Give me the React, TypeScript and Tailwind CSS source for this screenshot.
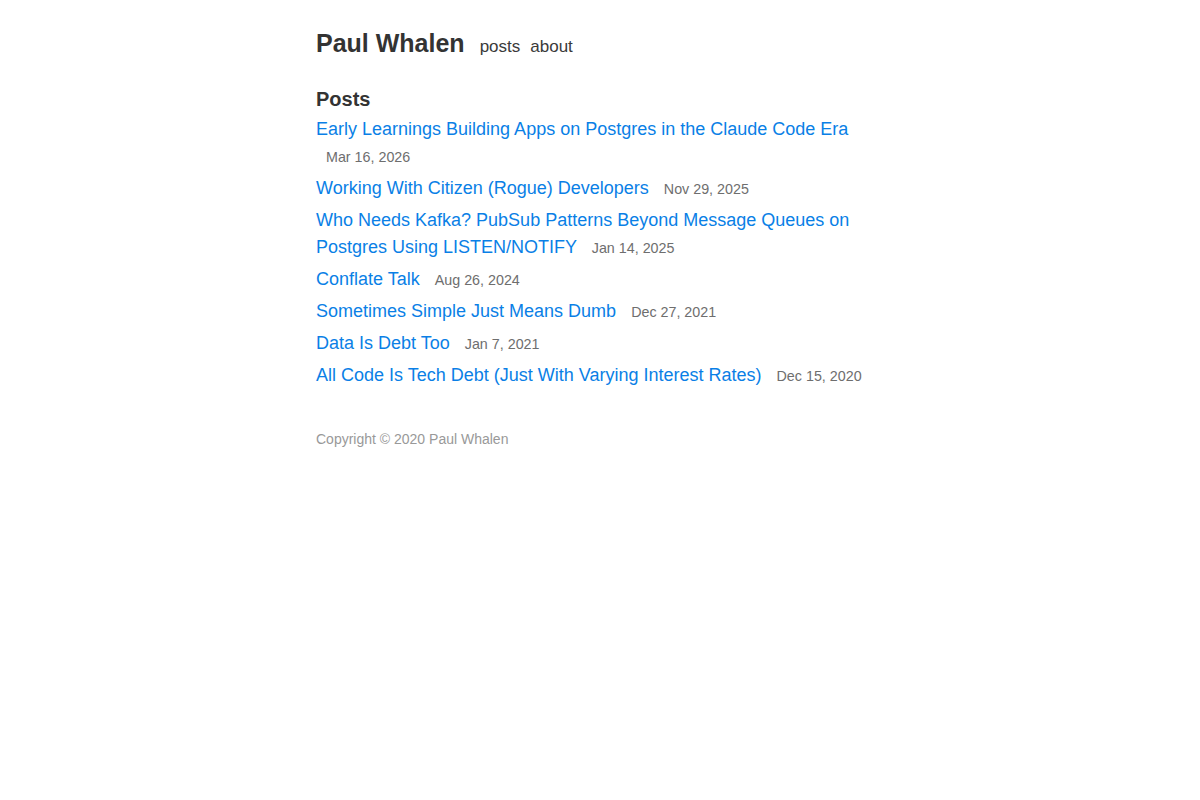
import React from 'react';

interface Post {
  title: string;
  date: string;
}

const posts: Post[] = [
  { title: 'Early Learnings Building Apps on Postgres in the Claude Code Era', date: 'Mar 16, 2026' },
  { title: 'Working With Citizen (Rogue) Developers', date: 'Nov 29, 2025' },
  { title: 'Who Needs Kafka? PubSub Patterns Beyond Message Queues on Postgres Using LISTEN/NOTIFY', date: 'Jan 14, 2025' },
  { title: 'Conflate Talk', date: 'Aug 26, 2024' },
  { title: 'Sometimes Simple Just Means Dumb', date: 'Dec 27, 2021' },
  { title: 'Data Is Debt Too', date: 'Jan 7, 2021' },
  { title: 'All Code Is Tech Debt (Just With Varying Interest Rates)', date: 'Dec 15, 2020' },
];

export default function App() {
  return (
    <div className="min-h-[800px] bg-white font-['Liberation_Sans',Arial,sans-serif] text-[#333]">
      <div className="mx-auto w-[568px] pt-[26px]">
        <header className="flex items-baseline">
          <a href="#" className="text-[25px] font-bold leading-[34px] text-[#333]">Paul Whalen</a>
          <nav className="ml-[15px] flex items-baseline gap-[10px] text-[17px] text-[#3a3a3a]">
            <a href="#">posts</a>
            <a href="#">about</a>
          </nav>
        </header>

        <main className="mt-[27px]">
          <h1 className="text-[20px] font-bold leading-[24px] text-[#333]">Posts</h1>
          <ul className="mt-[5px]">
            {posts.map((post) => (
              <li key={post.title} className="mb-[5px] text-[18px] leading-[27px]">
                <a href="#" className="text-[#0a7fe6]">{post.title}</a>{' '}
                <span className="ml-[10px] whitespace-nowrap text-[14.3px] leading-none text-[#6e6e6e]">{post.date}</span>
              </li>
            ))}
          </ul>
        </main>

        <footer className="mt-[40px] text-[14px] text-[#999]">
          Copyright © 2020 Paul Whalen
        </footer>
      </div>
    </div>
  );
}
